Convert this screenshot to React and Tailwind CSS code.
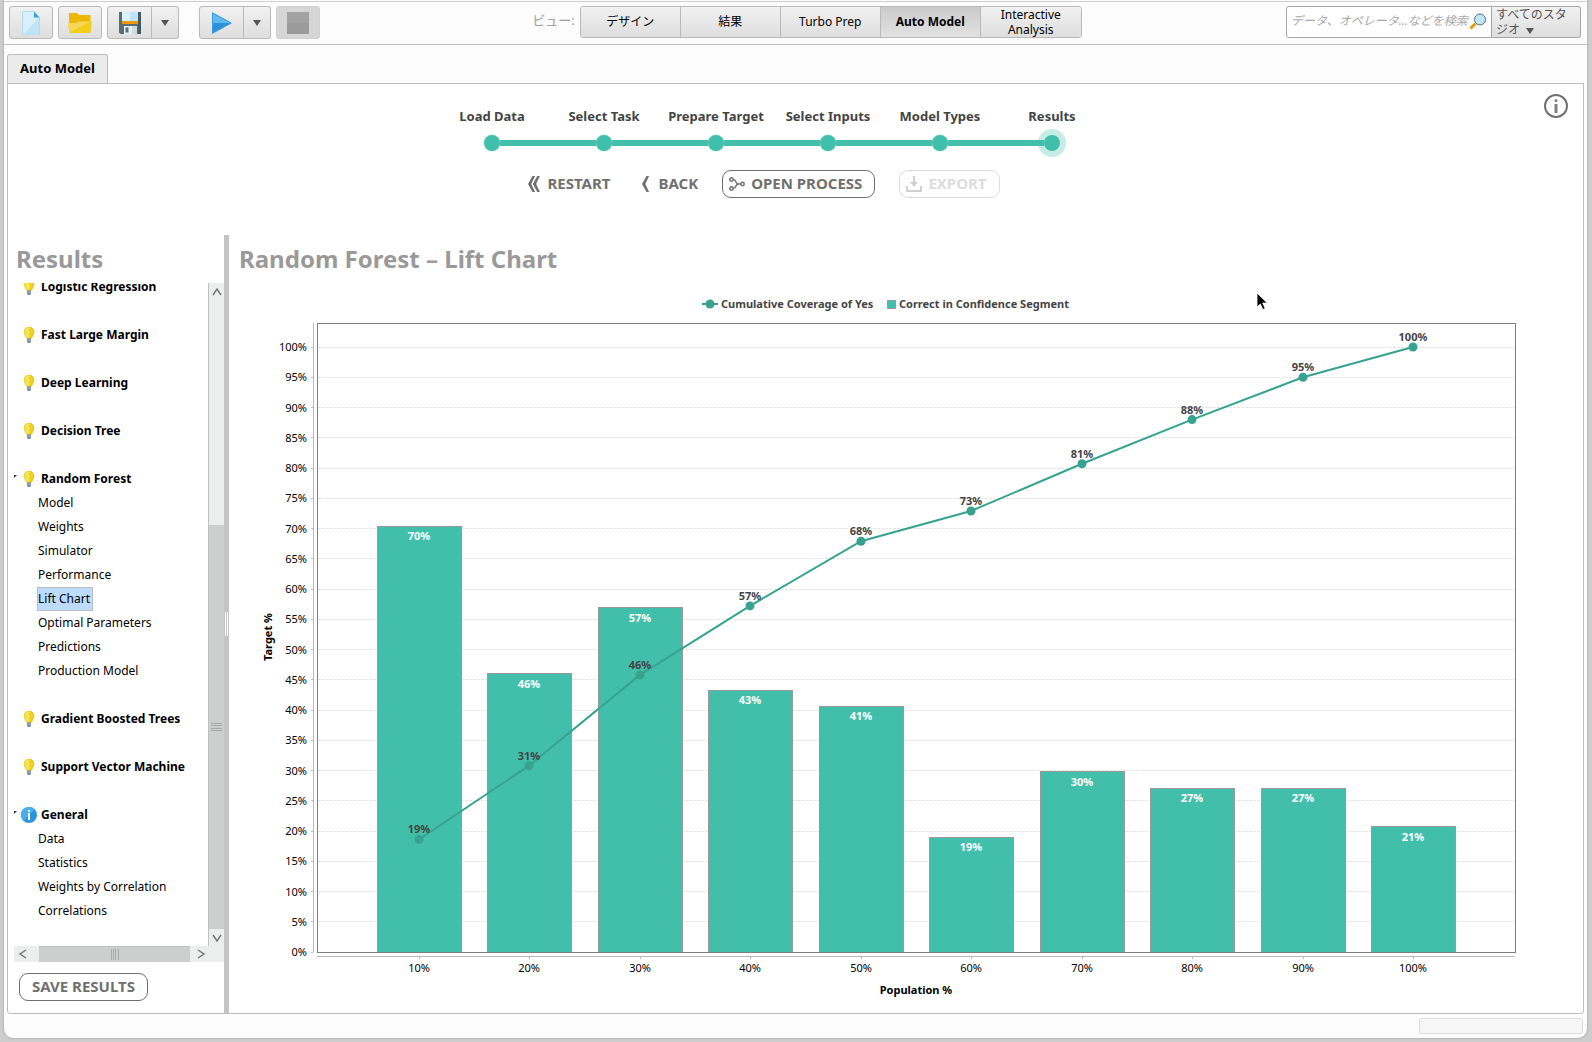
import React from "react";

const steps = [
  "Load Data",
  "Select Task",
  "Prepare Target",
  "Select Inputs",
  "Model Types",
  "Results",
];

const views = [
  { label: "デザイン" },
  { label: "結果" },
  { label: "Turbo Prep" },
  { label: "Auto Model", active: true },
  { label: "Interactive Analysis" },
];

const tree = [
  { label: "Logistic Regression", items: [] },
  { label: "Fast Large Margin", items: [] },
  { label: "Deep Learning", items: [] },
  { label: "Decision Tree", items: [] },
  {
    label: "Random Forest",
    items: [
      "Model",
      "Weights",
      "Simulator",
      "Performance",
      "Lift Chart",
      "Optimal Parameters",
      "Predictions",
      "Production Model",
    ],
  },
  { label: "Gradient Boosted Trees", items: [] },
  { label: "Support Vector Machine", items: [] },
  {
    label: "General",
    info: true,
    items: ["Data", "Statistics", "Weights by Correlation", "Correlations"],
  },
];

const segments = [
  { population: "10%", correct: 70.4, coverage: 18.6 },
  { population: "20%", correct: 46, coverage: 30.8 },
  { population: "30%", correct: 56.9, coverage: 45.8 },
  { population: "40%", correct: 43.3, coverage: 57.2 },
  { population: "50%", correct: 40.6, coverage: 67.9 },
  { population: "60%", correct: 19, coverage: 72.9 },
  { population: "70%", correct: 29.8, coverage: 80.7 },
  { population: "80%", correct: 27.1, coverage: 88 },
  { population: "90%", correct: 27.1, coverage: 95 },
  { population: "100%", correct: 20.7, coverage: 100 },
];

/* ---------- icons ---------- */

const NewFileIcon = () => (
  <svg width="18" height="24" viewBox="0 0 18 24" aria-hidden="true">
    <path d="M.5.5h11.5l5.5 6v17H.5z" fill="#d9effb" stroke="#b5daee" />
    <path d="M17 7v16.500H1z" fill="#bfe3f7" />
    <path d="M12 .5l5.500 6H12z" fill="#3a9fe0" />
  </svg>
);

const FolderIcon = () => (
  <svg width="24" height="20" viewBox="0 0 24 20" aria-hidden="true">
    <path d="M1 0h8l2 2h11.500v8H1z" fill="#efb800" />
    <path d="M0 10h9l2-1.500h13l-1.500 11.500h-21z" fill="#f3ce1c" />
    <path d="M0 10h9l2-1.500h12L1.500 19z" fill="#f5d856" />
  </svg>
);

const SaveIcon = () => (
  <svg width="22" height="22" viewBox="0 0 22 22" aria-hidden="true">
    <path d="M0 0h22v22H1.500L0 20.500z" fill="#546e7a" />
    <path d="M19 0h3v22h-3z" fill="#455a64" />
    <path d="M3 0h16v9H3z" fill="#bfe3f7" />
    <path d="M3 0h8v9H3z" fill="#dcf1fc" />
    <path d="M3 9h16v3H3z" fill="#f09a0a" />
    <path d="M5 14h13v8H5z" fill="#cfd8dc" />
    <path d="M5 14h8v8H5z" fill="#eceff1" />
    <path d="M6.500 15.500h3v5h-3z" fill="#546e7a" />
  </svg>
);

const PlayIcon = () => (
  <svg width="20" height="22" viewBox="0 0 20 22" aria-hidden="true">
    <path d="M0 0l20 11H0z" fill="#63b8ee" />
    <path d="M0 11h20L0 22z" fill="#2b93dc" />
    <path d="M.5 1v20L19 11z" fill="none" stroke="#3d9ddf" />
  </svg>
);

const StopIcon = () => (
  <svg width="22" height="22" viewBox="0 0 22 22" aria-hidden="true">
    <path d="M0 0h22v22H0z" fill="#a3a3a3" />
    <path d="M0 11h22v11H0z" fill="#9b9b9b" />
  </svg>
);

const CaretIcon = () => (
  <svg
    width="8"
    height="6"
    viewBox="0 0 8 6"
    className="inline-block"
    aria-hidden="true"
  >
    <path d="M0 0h8L4 6z" fill="#555" />
  </svg>
);

const MagnifierIcon = () => (
  <svg width="18" height="18" viewBox="0 0 18 18" aria-hidden="true">
    <path d="M6.500 10.500L1.500 15.500" stroke="#e29a12" strokeWidth="3" />
    <circle cx="11" cy="6.500" r="5.500" fill="#c3e5fa" stroke="#546e7a" />
  </svg>
);

const InfoIcon = () => (
  <svg width="24" height="24" viewBox="0 0 24 24" aria-hidden="true">
    <circle cx="12" cy="12" r="11" fill="#fff" stroke="#707070" strokeWidth="2" />
    <circle cx="12" cy="6.500" r="1.500" fill="#808080" />
    <path d="M12 10v9" stroke="#808080" strokeWidth="3" />
  </svg>
);

const BulbIcon = () => (
  <svg width="16" height="16" viewBox="0 0 16 16" aria-hidden="true">
    <path
      d="M8 0c3 0 5.200 2 5.200 5 0 2.800-1.600 3.600-2.200 6.300H5C4.400 8.600 2.800 7.800 2.800 5 2.800 2 5 0 8 0z"
      fill="#f4e64e"
    />
    <path
      d="M8.500 0c2.800.2 4.700 2.200 4.700 5 0 2.800-1.600 3.600-2.200 6.300H8.500z"
      fill="#eecf24"
    />
    <path
      d="M8 .4c2.800 0 4.800 1.800 4.800 4.600 0 2.700-1.600 3.500-2.200 6.100H5.400C4.800 8.500 3.200 7.700 3.200 5 3.200 2.200 5.200.4 8 .4z"
      fill="none"
      stroke="#d9bd1c"
      strokeWidth="0.500"
    />
    <path d="M6 11.300h4V15l-1 1H7l-1-1z" fill="#78909c" />
    <path d="M6 13h4" stroke="#a4b5bd" />
  </svg>
);

const BlueInfoIcon = () => (
  <svg width="16" height="16" viewBox="0 0 16 16" aria-hidden="true">
    <circle cx="8" cy="8" r="8" fill="#2b93dc" />
    <path d="M0 8a8 8 0 0 1 13.700-5.600L2.400 13.700A8 8 0 0 1 0 8z" fill="#47aeef" />
    <path d="M7 3h2v2H7zM7 6h2v7H7z" fill="#fff" />
  </svg>
);

const ChevronIcon = ({ double }) => (
  <svg
    width={double ? 12 : 8}
    height="16"
    viewBox={double ? "0 0 12 16" : "0 0 8 16"}
    fill="#707070"
    aria-hidden="true"
  >
    <path d="M4.500 0h2.600L3.300 8l3.800 8H4.500L0 8z" />
    {double && <path d="M9.300 0h2.600L8.100 8l3.800 8H9.300L4.800 8z" />}
  </svg>
);

const ProcessIcon = () => (
  <svg
    width="16"
    height="14"
    viewBox="0 0 16 14"
    fill="none"
    stroke="#707070"
    strokeWidth="1.500"
    aria-hidden="true"
  >
    <circle cx="2.500" cy="2.500" r="1.700" />
    <circle cx="2.500" cy="11.500" r="1.700" />
    <circle cx="13.500" cy="7" r="1.700" />
    <path d="M4.200 2.500C7.500 2.500 6.500 7 9 7h2.800M4.200 11.500C7.500 11.500 6.500 7 9 7" />
  </svg>
);

const ExportIcon = () => (
  <svg width="16" height="16" viewBox="0 0 16 16" aria-hidden="true">
    <path d="M1 10v5h14v-5" fill="none" stroke="#d0d0d0" strokeWidth="2" />
    <path d="M7 0h2v6h3l-4 5-4-5h3z" fill="#d0d0d0" />
  </svg>
);

const ArrowIcon = ({ d }) => (
  <svg
    width="10"
    height="10"
    viewBox="0 0 10 10"
    fill="none"
    stroke="#777"
    strokeWidth="1.500"
    aria-hidden="true"
  >
    <path d={d} />
  </svg>
);

/* ---------- toolbar ---------- */

const toolButton =
  "flex items-center justify-center h-[33px] border border-[#b9b9b9] bg-linear-to-b from-[#f1f1f1] to-[#dedede]";

const Toolbar = () => (
  <header className="flex items-start h-11 mt-px pt-1 pl-[5px] pr-[6px] border-t border-b border-t-[#cfcfcf] border-b-[#c0c0c0] bg-[#fcfcfc]">
    <div className="flex flex-1 gap-5">
      <div className="flex gap-[5px]">
        <button aria-label="New" className={`${toolButton} w-11 rounded-[3px]`}>
          <NewFileIcon />
        </button>
        <button aria-label="Open" className={`${toolButton} w-11 rounded-[3px]`}>
          <FolderIcon />
        </button>
        <div className="flex">
          <button aria-label="Save" className={`${toolButton} w-[45px] rounded-l-[3px]`}>
            <SaveIcon />
          </button>
          <button
            aria-label="Save options"
            className={`${toolButton} w-[27px] border-l-0 rounded-r-[3px]`}
          >
            <CaretIcon />
          </button>
        </div>
      </div>
      <div className="flex gap-[5px]">
        <div className="flex">
          <button aria-label="Run" className={`${toolButton} w-[45px] rounded-l-[3px]`}>
            <PlayIcon />
          </button>
          <button
            aria-label="Run options"
            className={`${toolButton} w-[27px] border-l-0 rounded-r-[3px]`}
          >
            <CaretIcon />
          </button>
        </div>
        <button
          aria-label="Stop"
          disabled
          className="flex items-center justify-center w-11 h-[33px] rounded-[3px] border border-[#cfcfcf] bg-[#d6d6d6]"
        >
          <StopIcon />
        </button>
      </div>
    </div>

    <nav className="flex items-center pl-6">
      <span className="mr-[5px] pb-[2px] text-[13px] text-[#a0a0a0]">ビュー:</span>
      <div className="flex h-8 overflow-hidden rounded-[3px] border border-[#b9b9b9] divide-x divide-[#b9b9b9]">
        {views.map(({ label, active }) => (
          <button
            key={label}
            className={`w-[100px] px-3 pb-[2px] text-[12px] leading-[15px] bg-linear-to-b ${
              active
                ? "font-bold from-[#cacaca] to-[#e2e2e2]"
                : "from-[#f1f1f1] to-[#dedede]"
            }`}
          >
            {label}
          </button>
        ))}
      </div>
    </nav>

    <div className="flex flex-1 justify-end">
      <label className="flex items-center w-[206px] h-8 pl-1 pr-1 rounded-l-[3px] border border-[#a6a6a6] bg-white">
        <input
          type="text"
          aria-label="検索"
          placeholder="データ、オペレータ...などを検索"
          className="min-w-0 flex-1 pb-[2px] text-[12px] italic outline-none placeholder:text-[#a8a8a8]"
        />
        <MagnifierIcon />
      </label>
      <button
        aria-haspopup="listbox"
        className="w-[89px] h-8 pl-1 pr-2 pb-[2px] rounded-r-[3px] border border-l-0 border-[#a6a6a6] bg-linear-to-b from-[#f1f1f1] to-[#dedede] text-left text-[12px] leading-[15px] text-[#555]"
      >
        すべてのスタジオ &nbsp;
        <CaretIcon />
      </button>
    </div>
  </header>
);

/* ---------- wizard ---------- */

const Stepper = () => (
  <ol className="flex justify-center">
    {steps.map((step, i) => {
      const last = i === steps.length - 1;
      return (
        <li key={step} className="w-28">
          <div className="text-center text-[13px] leading-5 font-bold whitespace-nowrap text-[#444]">
            {step}
          </div>
          <div className="flex items-center h-7 mt-[3px]">
            <span className={`h-[6px] flex-1 ${i === 0 ? "" : "bg-[#42bfab]"}`} />
            <span
              className={`size-4 rounded-full bg-[#42bfab] ${
                last ? "ring-6 ring-[#42bfab]/30" : "ring-1 ring-[#42bfab]/20"
              }`}
            />
            <span className={`h-[6px] flex-1 ${last ? "" : "bg-[#42bfab]"}`} />
          </div>
        </li>
      );
    })}
  </ol>
);

const wizardButton = "flex items-center h-7 text-[15px] font-bold";

const WizardHeader = () => (
  <div className="flex items-start h-[151px]">
    <div className="flex-1 pt-[22px] pr-2">
      <Stepper />
      <div className="flex justify-center mt-[13px] pr-4">
        <button className={`${wizardButton} gap-[7px] text-[#707070]`}>
          <ChevronIcon double />
          <span className="pb-[2px]">RESTART</span>
        </button>
        <button className={`${wizardButton} ml-8 gap-2 text-[#707070]`}>
          <ChevronIcon />
          <span className="pb-[2px]">BACK</span>
        </button>
        <button
          className={`${wizardButton} ml-6 pl-[6px] pr-3 gap-[6px] rounded-[9px] border border-[#707070] text-[#707070]`}
        >
          <ProcessIcon />
          <span className="pb-[2px]">OPEN PROCESS</span>
        </button>
        <button
          disabled
          className={`${wizardButton} ml-6 pl-[6px] pr-3 gap-[6px] rounded-[9px] border border-[#dcdcdc] text-[#dcdcdc]`}
        >
          <ExportIcon />
          <span className="pb-[2px]">EXPORT</span>
        </button>
      </div>
    </div>
    <button aria-label="Info" className="mt-[10px] mr-[15px]">
      <InfoIcon />
    </button>
  </div>
);

/* ---------- results tree ---------- */

const ResultsTree = () => (
  <ul className="-mt-2 pb-[23px] text-[12px] leading-6">
    {tree.map(({ label, info, items }) => (
      <li key={label} className="mb-6 last:mb-0">
        <button className="flex items-center h-6 font-bold whitespace-nowrap">
          <span className="flex w-[7px] h-2 items-start">
            {items.length > 0 && (
              <svg width="3" height="3" viewBox="0 0 3 3" aria-hidden="true">
                <path d="M0 0h3L0 3z" fill="#333" />
              </svg>
            )}
          </span>
          {info ? <BlueInfoIcon /> : <BulbIcon />}
          <span className="ml-1">{label}</span>
        </button>
        {items.length > 0 && (
          <ul className="pl-6">
            {items.map((item) => (
              <li key={item} className="h-6">
                <button
                  className={`block h-6 leading-[22px] border whitespace-nowrap -ml-px ${
                    item === "Lift Chart"
                      ? "border-[#bdbdbd] bg-[#bddaff] pr-[2px]"
                      : "border-transparent"
                  }`}
                >
                  {item}
                </button>
              </li>
            ))}
          </ul>
        )}
      </li>
    ))}
  </ul>
);

const Sidebar = () => (
  <aside className="flex flex-col w-[216px] shrink-0">
    <h2 className="h-12 pl-2 pt-2 text-[24px] leading-8 font-bold text-[#999]">
      Results
    </h2>
    <div className="flex ml-[6px]">
      <div className="flex-1 min-w-0 overflow-hidden">
        <ResultsTree />
      </div>
      <div className="flex flex-col items-center w-4 border-l border-[#bfc1c0] bg-[#ebeeed]">
        <div className="flex items-center h-[18px]">
          <ArrowIcon d="M1 8l4-6 4 6" />
        </div>
        <div className="h-[224px]" />
        <div className="flex flex-1 w-full items-center justify-center bg-[#cccfce]">
          <div className="w-[11px] h-2 border-y border-[#aaa] flex flex-col justify-evenly">
            <div className="h-px bg-[#aaa]" />
            <div className="h-px bg-[#aaa]" />
          </div>
        </div>
        <div className="flex items-center h-[17px]">
          <ArrowIcon d="M1 2l4 6 4-6" />
        </div>
      </div>
    </div>
    <div className="flex items-center h-4 ml-[6px] bg-[#ebeeed]">
      <div className="flex justify-center w-[25px] pr-2">
        <ArrowIcon d="M8 1L2 5l6 4" />
      </div>
      <div className="flex flex-1 h-full items-center justify-center border-t border-[#bfc1c0] bg-[#cccfce]">
        <div className="flex justify-evenly w-2 h-[11px] border-x border-[#aaa]">
          <div className="w-px bg-[#aaa]" />
          <div className="w-px bg-[#aaa]" />
        </div>
      </div>
      <div className="flex items-center w-[34px] pl-[6px]">
        <ArrowIcon d="M2 1l6 4-6 4" />
      </div>
    </div>
    <button className="self-start h-7 ml-[11px] mt-[11px] mb-3 px-3 pb-[2px] rounded-[9px] border border-[#707070] text-[15px] font-bold text-[#707070]">
      SAVE RESULTS
    </button>
  </aside>
);

/* ---------- lift chart ---------- */

const PLOT = { left: 88, right: 1286, top: 43, bottom: 672 };
const BAR_WIDTH = 84;

const xAt = (i) => Math.round(189.5 + i * 110.5);
const yAt = (value) => PLOT.bottom - value * 6.05;

const LiftChart = () => {
  const ticks = Array.from({ length: 21 }, (_, i) => i * 5);
  const line = segments
    .map(({ coverage }, i) => `${xAt(i)},${yAt(coverage)}`)
    .join(" ");

  return (
    <svg
      viewBox="0 0 1354 730"
      className="block w-full h-auto"
      fontSize="11"
      role="img"
      aria-label="Random Forest lift chart"
    >
      <g fontWeight="bold" fill="#444">
        <path d="M473 24h16" stroke="#38a291" strokeWidth="2" />
        <circle cx="481" cy="24" r="4.500" fill="#38a291" />
        <text x="492" y="28">Cumulative Coverage of Yes</text>
        <path d="M658.500 20.500h8v8h-8z" fill="#42bfab" stroke="#999" />
        <text x="670" y="28">Correct in Confidence Segment</text>
      </g>

      <g shapeRendering="crispEdges" stroke="#b8b8b8">
        <path d={`M84.500 ${PLOT.top}V${PLOT.bottom}M${PLOT.left} 676.500H${PLOT.right}`} />
        {ticks.map((tick) => (
          <g key={tick}>
            <path d={`M82 ${yAt(tick)}h2`} />
            <path
              d={`M${PLOT.left} ${yAt(tick)}H${PLOT.right}`}
              stroke="#e6e6e6"
              strokeDasharray="3 1"
            />
          </g>
        ))}
        {segments.map(({ population }, i) => (
          <path key={population} d={`M${xAt(i)} 677v2`} />
        ))}
      </g>

      {ticks.map((tick) => (
        <text key={tick} x="78" y={Math.round(yAt(tick)) + 4} textAnchor="end">
          {tick}%
        </text>
      ))}

      <g shapeRendering="crispEdges">
        {segments.map(({ population, correct }, i) => (
          <rect
            key={population}
            x={xAt(i) - BAR_WIDTH / 2}
            y={yAt(correct)}
            width={BAR_WIDTH}
            height={PLOT.bottom - yAt(correct)}
            fill="#42bfab"
            stroke="#999"
          />
        ))}
        <rect
          x={PLOT.left}
          y={PLOT.top}
          width={PLOT.right - PLOT.left}
          height={PLOT.bottom - PLOT.top}
          fill="none"
          stroke="#808080"
        />
      </g>

      <polyline points={line} fill="none" stroke="#38a291" strokeWidth="2" />

      {segments.map(({ population, correct, coverage }, i) => (
        <g key={population} textAnchor="middle">
          <circle cx={xAt(i)} cy={yAt(coverage)} r="4.500" fill="#38a291" />
          <text x={xAt(i)} y={yAt(correct) + 14} fontWeight="bold" fill="#fff">
            {Math.round(correct)}%
          </text>
          <text x={xAt(i)} y={yAt(coverage) - 6} fontWeight="bold" fill="#444">
            {Math.round(coverage)}%
          </text>
          <text x={xAt(i)} y="692">
            {population}
          </text>
        </g>
      ))}

      <text x="687" y="714" textAnchor="middle" fontWeight="bold">
        Population %
      </text>
      <text
        transform="translate(43 357) rotate(-90)"
        textAnchor="middle"
        fontWeight="bold"
      >
        Target %
      </text>

      {/* pointer */}
      <path
        d="M1028 13v14l3.300-3 2.500 5.500 2.400-1-2.500-5.500h4.600z"
        fill="#000"
        stroke="#fff"
        strokeWidth="0.800"
      />
    </svg>
  );
};

const App = () => (
  <div className="flex min-h-screen pl-1 pr-[5px] pb-1 bg-[#cdcdcd] text-black font-['Noto_Sans','Noto_Sans_CJK_JP',sans-serif]">
    <div className="flex flex-col flex-1 min-w-0 overflow-hidden rounded-b-[9px] bg-[#fcfcfc] shadow-[0_0_2px_#888]">
      <Toolbar />

      <div className="flex pl-[3px] pt-[9px]">
        <button className="h-[30px] w-[101px] -mb-px pb-[2px] rounded-t-[3px] border border-b-0 border-[#bdbdbd] bg-[#ebebeb] text-[13px] font-bold">
          Auto Model
        </button>
      </div>

      <main className="flex flex-col flex-1 mx-[3px] rounded-b-[3px] border border-[#bdbdbd] bg-white">
        <WizardHeader />
        <div className="flex flex-1">
          <Sidebar />
          <div className="flex items-center justify-center w-[5px] shrink-0 bg-[#c4c4c4]">
            <div className="w-[3px] h-6 border-x border-white" />
          </div>
          <section className="flex-1 min-w-0">
            <h1 className="h-[45px] pl-[10px] pt-2 text-[24px] leading-8 font-bold text-[#999]">
              Random Forest – Lift Chart
            </h1>
            <LiftChart />
          </section>
        </div>
      </main>

      <footer className="flex justify-end h-6 pt-1 pr-1">
        <div className="w-[164px] h-4 rounded-[3px] border border-[#dcdcdc] bg-[#f6f6f6]" />
      </footer>
    </div>
  </div>
);

export default App;
